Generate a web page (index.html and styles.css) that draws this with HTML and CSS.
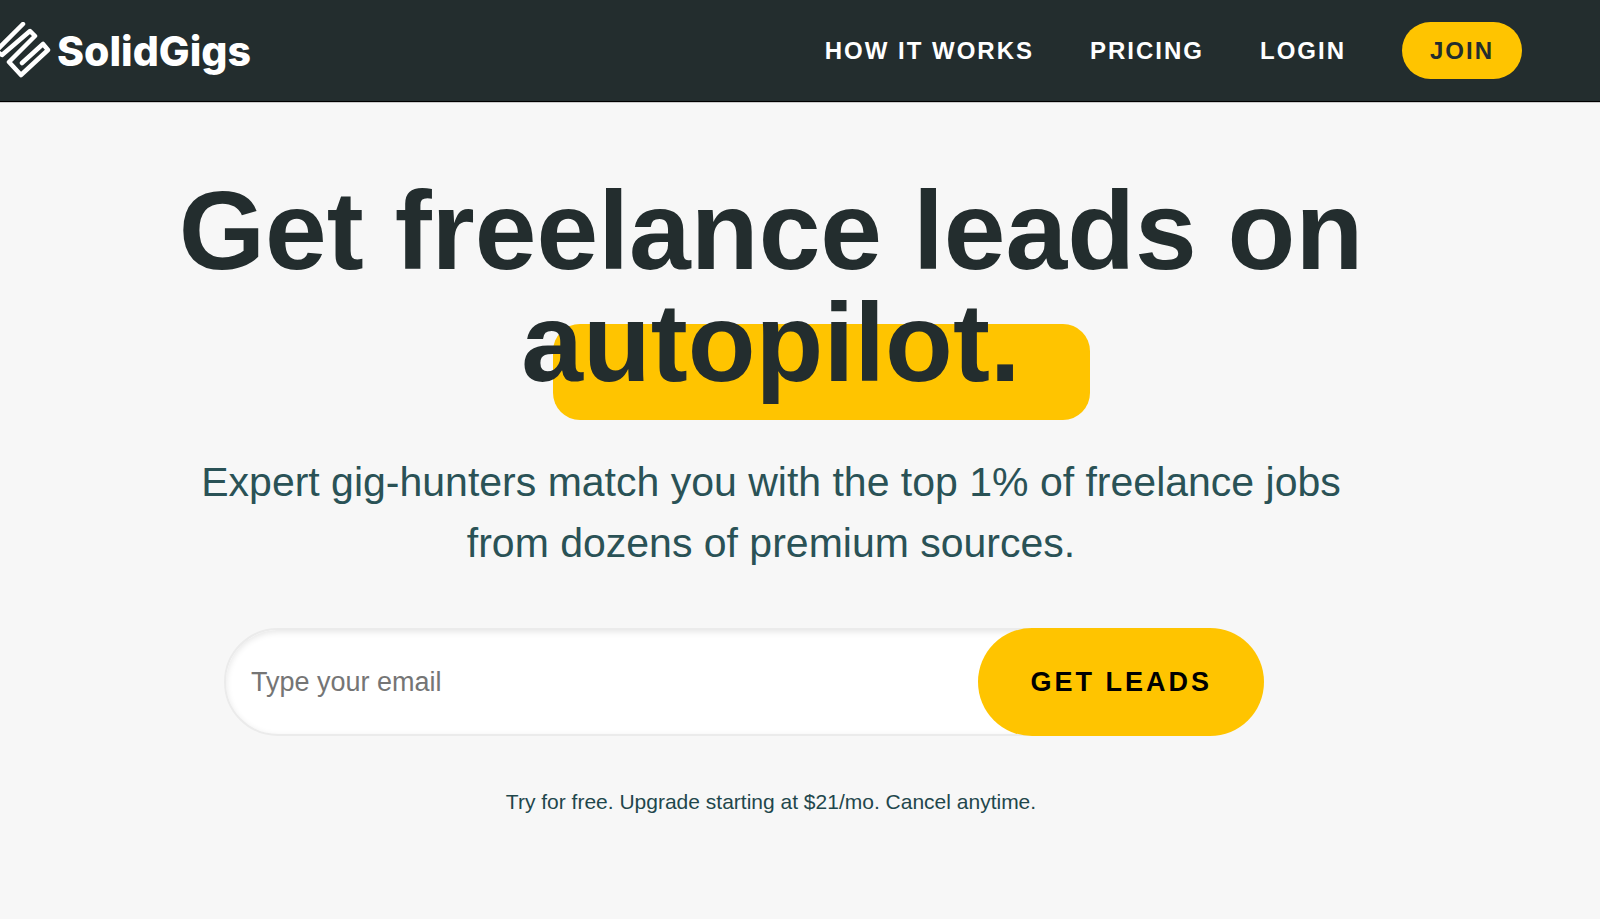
FILE: index.html
```
<!DOCTYPE html>
<html lang="en">
<head>
    <meta charset="UTF-8">
    <meta name="viewport" content="width=device-width, initial-scale=1.0">
    <title>SolidGigs</title>
    <link rel="stylesheet" href="styles.css">
</head>
<body>
    <header class="header">
        <a class="logo" href="#">
            <svg class="logo-icon" width="51" height="57" viewBox="0 6 51 57" aria-hidden="true">
                <path d="M23 8 L-4 35 L2 39 L30 15 L35 20 L9 46 L21 59 L48 34 L43 28 L22 47"/>
            </svg>
            <span class="logo-text">SolidGigs</span>
        </a>
        <nav class="nav">
            <a href="#how">How it works</a>
            <a href="#pricing">Pricing</a>
            <a href="#login">Login</a>
            <a class="join" href="#join">Join</a>
        </nav>
    </header>
    <main class="hero">
        <h1 class="title">Get freelance leads on <span class="highlight">autopilot.</span></h1>
        <p class="subtitle">Expert gig-hunters match you with the top 1% of freelance jobs from dozens of premium sources.</p>
        <form class="signup">
            <input class="email" type="email" name="email" placeholder="Type your email" aria-label="Type your email">
            <button class="button" type="submit">Get leads</button>
        </form>
        <p class="note">Try for free. Upgrade starting at $21/mo. Cancel anytime.</p>
    </main>
</body>
</html>
```
FILE: styles.css
```
* {
    box-sizing: border-box;
}

body {
    margin: 0;
    font-family: "Liberation Sans", Arial, sans-serif;
    background-color: #f7f7f7;
    color: #232d2e;
}

.header {
    display: flex;
    align-items: center;
    justify-content: space-between;
    padding: 22px 78px 22px 0;
    background-color: #232d2e;
    border-bottom: 1px solid #000;
    box-shadow: 0 1px 0 #ccc;
}

.logo {
    display: flex;
    align-items: center;
    gap: 6px;
    color: #fff;
    text-decoration: none;
}

.logo-icon {
    fill: none;
    stroke: #fff;
    stroke-width: 4.5;
    stroke-linecap: round;
    stroke-linejoin: round;
}

.logo-text {
    font-family: Inter, sans-serif;
    font-size: 41px;
    font-weight: 800;
    line-height: 56px;
}

.nav {
    display: flex;
    align-items: center;
    gap: 56px;
}

.nav a {
    color: #fff;
    font-size: 24px;
    font-weight: bold;
    letter-spacing: 2px;
    line-height: 57px;
    text-decoration: none;
    text-transform: uppercase;
}

.nav .join {
    padding: 0 28px;
    border-radius: 29px;
    background-color: #ffc400;
    color: #232d2e;
}

.hero {
    padding: 73px 58px 72px 0;
    text-align: center;
}

.title {
    max-width: 1240px;
    margin: 0 auto;
    font-size: 111px;
    line-height: 112px;
}

.highlight {
    position: relative;
    z-index: 0;
}

/* yellow marker behind the last word */
.highlight::before {
    content: "";
    position: absolute;
    z-index: -1;
    left: 32px;
    right: -69px;
    bottom: -15px;
    height: 96px;
    border-radius: 27px;
    background-color: #ffc400;
}

.subtitle {
    max-width: 1180px;
    margin: 53px auto 0;
    color: #2a5256;
    font-size: 41px;
    line-height: 61px;
}

.signup {
    display: flex;
    max-width: 1094px;
    margin: 54px auto 0;
    padding-right: 54px;
}

.email {
    flex: 1;
    min-width: 0;
    height: 108px;
    margin-right: -110px;
    padding: 0 120px 0 25px;
    border: 2px solid #ebebeb;
    border-radius: 54px;
    background-color: #fff;
    box-shadow: inset 0 2px 6px rgba(0, 0, 0, 0.1);
    font-family: inherit;
    font-size: 27px;
}

.email::placeholder {
    color: #757575;
}

.button {
    position: relative;
    height: 108px;
    padding: 0 52px;
    border: none;
    border-radius: 54px;
    background-color: #ffc400;
    color: #000;
    font-family: inherit;
    font-size: 27px;
    font-weight: bold;
    letter-spacing: 3px;
    text-transform: uppercase;
    cursor: pointer;
}

.note {
    margin: 50px 0 0;
    color: #1f474c;
    font-size: 21px;
    line-height: 32px;
}
```
